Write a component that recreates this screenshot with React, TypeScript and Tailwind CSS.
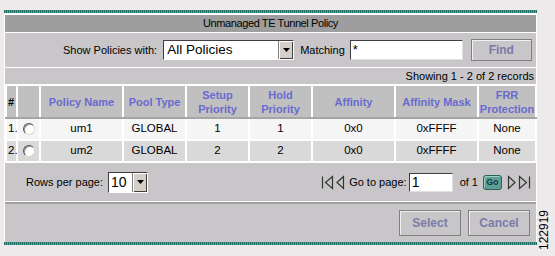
import React from 'react';

const rows = [
  { n: '1.', name: 'um1', pool: 'GLOBAL', setup: '1', hold: '1', aff: '0x0', mask: '0xFFFF', frr: 'None' },
  { n: '2.', name: 'um2', pool: 'GLOBAL', setup: '2', hold: '2', aff: '0x0', mask: '0xFFFF', frr: 'None' },
];

const Stripe = () => (
  <div className="h-[3px] bg-[repeating-linear-gradient(90deg,#1d6f66_0px,#1d6f66_1px,#4fa59b_1px,#4fa59b_2px)]" />
);

const DropArrow = () => (
  <div className="w-[15px] h-full bg-[#d4d0c8] border-l border-[#808080] flex items-center justify-center shadow-[inset_1px_1px_0_#fff,inset_-1px_-1px_0_#404040]">
    <svg width="7" height="4" viewBox="0 0 7 4">
      <path d="M0 0h7L3.5 4z" fill="#000" />
    </svg>
  </div>
);

const Radio = () => (
  <div className="w-[12px] h-[12px] rounded-full bg-white border border-t-[#555] border-l-[#555] border-r-[#d8d8d8] border-b-[#d8d8d8] shadow-[inset_1px_1px_0_#999]" />
);

function PageIcon({ kind }: { kind: 'first' | 'prev' | 'next' | 'last' }) {
  if (kind === 'first')
    return (
      <svg width="13" height="15" viewBox="0 0 13 15">
        <path d="M1.5 1.5v12M11.5 1.5L4.5 7.5l7 6z" fill="none" stroke="#333" strokeWidth="1.2" />
      </svg>
    );
  if (kind === 'prev')
    return (
      <svg width="9" height="15" viewBox="0 0 9 15">
        <path d="M7.5 1.5L1 7.5l6.5 6z" fill="none" stroke="#333" strokeWidth="1.2" />
      </svg>
    );
  if (kind === 'next')
    return (
      <svg width="9" height="15" viewBox="0 0 9 15">
        <path d="M1.5 1.5L8 7.5l-6.5 6z" fill="none" stroke="#333" strokeWidth="1.2" />
      </svg>
    );
  return (
    <svg width="13" height="15" viewBox="0 0 13 15">
      <path d="M11.5 1.5v12M1.5 1.5l7 6-7 6z" fill="none" stroke="#333" strokeWidth="1.2" />
    </svg>
  );
}

const btn =
  'bg-[#c8c6c8] border border-[#808080] shadow-[inset_1px_1px_0_#f0f0f0] font-bold text-[12px] text-[#7b7ba8]';

export default function App() {
  return (
    <div className="relative w-[555px] h-[256px] bg-[#eeeaec] pt-[10px] font-['Liberation_Sans',Arial,sans-serif] text-[11px] text-black whitespace-nowrap">
      <div className="w-[533px] ml-[4px]">
        <Stripe />
        <div className="border-l border-r border-t-2 border-white">
          {/* title */}
          <div className="h-[17px] bg-[#9e9e9e] flex items-center justify-center tracking-[-0.4px]">
            Unmanaged TE Tunnel Policy
          </div>
          {/* filter row */}
          <div className="h-[35px] bg-[#c8c6c8] border-t border-white flex items-center">
            <span className="ml-[58px] shrink-0">Show Policies with:</span>
            <div className="ml-[6px] w-[131px] h-[20px] bg-white border border-t-[#404040] border-l-[#404040] border-r-white border-b-white flex">
              <span className="flex-1 text-[13.5px] leading-[18px] pl-[3px]">All Policies</span>
              <DropArrow />
            </div>
            <span className="ml-[6px]">Matching</span>
            <div className="ml-[5px] w-[113px] h-[20px] bg-white border border-t-[#404040] border-l-[#404040] border-r-[#e0e0e0] border-b-[#e0e0e0] text-[13px] leading-[17px] pl-[2px]">
              *
            </div>
            <button className={`${btn} ml-[8px] w-[61px] h-[22px]`}>Find</button>
          </div>
          {/* showing */}
          <div className="h-[17px] bg-[#c8c6c8] border-t border-white flex items-center justify-end pr-[2px]">
            Showing 1 - 2 of 2 records
          </div>
          <table className="w-full table-fixed border-collapse bg-[#c8c6c8]">
            <colgroup>
              <col className="w-[11px]" />
              <col className="w-[23px]" />
              <col className="w-[83px]" />
              <col className="w-[63px]" />
              <col className="w-[63px]" />
              <col className="w-[63px]" />
              <col className="w-[83px]" />
              <col className="w-[83px]" />
              <col className="w-[58px]" />
            </colgroup>
            <thead>
              <tr className="h-[33px] bg-[#c0c0c0] text-[11px] font-bold text-[#6a6ad0] leading-[14px]">
                <th className="border-2 border-white border-b-[#a6a6a6] text-black text-left pl-[1px]">#</th>
                <th className="border-2 border-white border-b-[#a6a6a6]"></th>
                <th className="border-2 border-white border-b-[#a6a6a6]">Policy Name</th>
                <th className="border-2 border-white border-b-[#a6a6a6]">Pool Type</th>
                <th className="border-2 border-white border-b-[#a6a6a6]">Setup<br />Priority</th>
                <th className="border-2 border-white border-b-[#a6a6a6]">Hold<br />Priority</th>
                <th className="border-2 border-white border-b-[#a6a6a6]">Affinity</th>
                <th className="border-2 border-white border-b-[#a6a6a6]">Affinity Mask</th>
                <th className="border-2 border-white border-b-[#a6a6a6]">FRR<br />Protection</th>
              </tr>
            </thead>
            <tbody className="text-[11.5px] text-center">
              {rows.map((r, i) => (
                <tr key={r.n} className={`h-[22px] ${i === 0 ? 'bg-[#f5f5f5]' : 'bg-[#d9d9d9]'}`}>
                  <td className="border-2 border-white text-left pl-[1px]">{r.n}</td>
                  <td className="border-2 border-white">
                    <div className="flex justify-center"><Radio /></div>
                  </td>
                  <td className="border-2 border-white">{r.name}</td>
                  <td className="border-2 border-white">{r.pool}</td>
                  <td className="border-2 border-white">{r.setup}</td>
                  <td className="border-2 border-white">{r.hold}</td>
                  <td className="border-2 border-white">{r.aff}</td>
                  <td className="border-2 border-white">{r.mask}</td>
                  <td className="border-2 border-white">{r.frr}</td>
                </tr>
              ))}
            </tbody>
          </table>
          {/* pagination */}
          <div className="h-[38px] bg-[#c8c6c8] flex items-center">
            <span className="ml-[21px]">Rows per page:</span>
            <div className="ml-[5px] w-[40px] h-[21px] bg-white border border-t-[#404040] border-l-[#404040] border-r-white border-b-white flex">
              <span className="flex-1 text-[14px] leading-[19px] pl-[2px]">10</span>
              <DropArrow />
            </div>
            <div className="ml-auto mr-[5px] flex items-center gap-[2px]">
              <PageIcon kind="first" />
              <PageIcon kind="prev" />
              <span className="ml-[2px]">Go to page:</span>
              <div className="w-[44px] h-[19px] bg-white border border-t-[#404040] border-l-[#404040] border-r-[#e0e0e0] border-b-[#e0e0e0] text-[14px] leading-[17px] pl-[2px]">
                1
              </div>
              <span className="ml-[5px]">of 1</span>
              <div className="ml-[3px] w-[19px] h-[15px] rounded-[3px] bg-[#5d9f97] border border-[#2c5f59] shadow-[inset_1px_1px_0_#9fd0ca] text-[8.5px] leading-none font-bold text-[#0f3d38] flex items-center justify-center">
                Go
              </div>
              <span className="ml-[3px] flex"><PageIcon kind="next" /></span>
              <PageIcon kind="last" />
            </div>
          </div>
          <div className="h-px bg-white" />
          <div className="h-[2px] bg-[#a0a0a0]" />
          {/* buttons */}
          <div className="h-[38px] bg-[#c8c6c8] flex items-center justify-end gap-[7px] pr-[6px]">
            <button className={`${btn} w-[62px] h-[26px]`}>Select</button>
            <button className={`${btn} w-[62px] h-[26px]`}>Cancel</button>
          </div>
        </div>
        <Stripe />
      </div>
      <div className="absolute left-[537px] top-[208px] w-[14px] h-[44px] flex items-center justify-center">
        <span className="block -rotate-90 text-[12px] leading-none">122919</span>
      </div>
    </div>
  );
}
